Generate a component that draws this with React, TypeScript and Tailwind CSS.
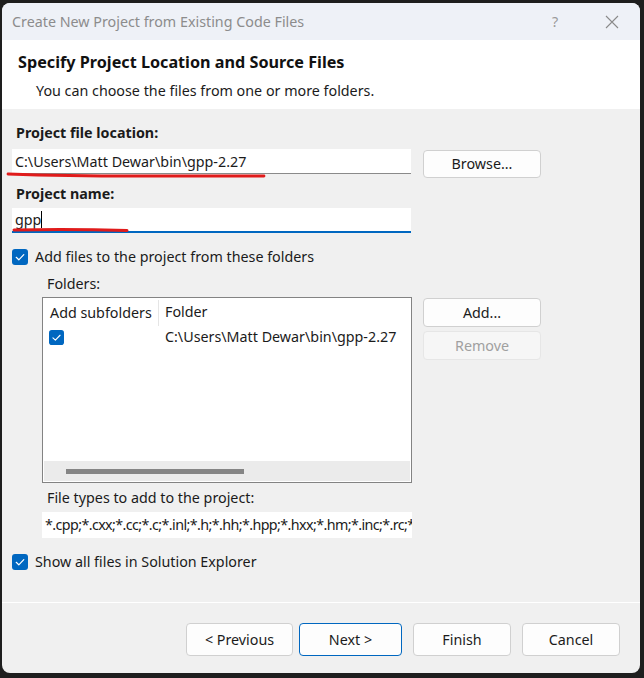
import React from "react";

const font = { fontFamily: '"Segoe UI", "Noto Sans", "Liberation Sans", sans-serif' };

function Check({ size = 16 }: { size?: number }) {
  return (
    <svg width={size} height={size} viewBox="0 0 16 16" className="shrink-0">
      <rect x="0" y="0" width="16" height="16" rx="3" fill="#0067c0" />
      <path d="M4.2 8.3 L6.8 10.8 L11.8 5.6" fill="none" stroke="#fff" strokeWidth="1.2" strokeLinecap="round" strokeLinejoin="round" />
    </svg>
  );
}

function Btn({ children, className = "" }: { children: React.ReactNode; className?: string }) {
  return (
    <button className={`rounded-[4px] border bg-[#fdfdfd] text-[14.3px] text-[#1b1b1b] ${className}`}>
      {children}
    </button>
  );
}

export default function App() {
  return (
    <div className="w-[644px] h-[678px] bg-[#1e1e1e] pt-[3px] pl-[2px] pr-[4px] pb-[5px]" style={font}>
      <div className="h-full w-full rounded-[8px] overflow-hidden bg-[#f0f0f0] flex flex-col">
        {/* title bar */}
        <div className="h-[37px] bg-[#eef1f7] flex items-center pl-[10px] text-[14.3px] text-[#8c8c8c] shrink-0">
          <span className="flex-1">Create New Project from Existing Code Files</span>
          <span className="w-[20px] text-center mr-[40px] text-[#9a9a9a]">?</span>
          <svg width="14" height="14" viewBox="0 0 14 14" className="mr-[21px]">
            <path d="M1 1 L13 13 M13 1 L1 13" stroke="#8a8a8a" strokeWidth="1.1" />
          </svg>
        </div>

        {/* header */}
        <div className="h-[69px] bg-white shrink-0 pl-[16px] pt-[10px]">
          <div className="text-[16.2px] font-bold text-[#111] leading-[24px]">Specify Project Location and Source Files</div>
          <div className="text-[14.3px] text-[#1b1b1b] leading-[20px] mt-[7px] pl-[18px]">You can choose the files from one or more folders.</div>
        </div>

        {/* body */}
        <div className="flex-1 pl-[10px] pt-[14px] text-[14.3px] text-[#1b1b1b]">
          <div className="font-bold leading-[20px] pl-[4px]">Project file location:</div>
          <div className="flex items-start mt-[6px]">
            <div className="relative w-[399px] h-[25px] bg-white border-b border-[#8a8a8a] pl-[3px] leading-[25px]">
              C:\Users\Matt Dewar\bin\gpp-2.27
              <svg className="absolute left-[-6px] top-[22px]" width="262" height="8" viewBox="0 0 262 8">
                <path d="M2 3 Q60 5 130 5 T258 5" fill="none" stroke="#e01b1b" strokeWidth="2.8" strokeLinecap="round" />
              </svg>
            </div>
            <Btn className="ml-[12px] mt-[1px] h-[28px] w-[118px] border-[#d0d0d0]">Browse...</Btn>
          </div>

          <div className="font-bold leading-[20px] pl-[4px] mt-[6px]">Project name:</div>
          <div className="relative w-[399px] h-[25px] bg-white border-b-2 border-[#0067c0] pl-[3px] leading-[24px] mt-[4px]">
            gpp<span className="inline-block w-[1px] h-[17px] bg-black align-[-3px]" />
            <svg className="absolute left-[0px] top-[19px]" width="118" height="6" viewBox="0 0 118 6">
              <path d="M2 3 Q60 2 115 3.5" fill="none" stroke="#e01b1b" strokeWidth="3" strokeLinecap="round" />
            </svg>
          </div>

          <div className="flex items-center gap-[7px] mt-[14px] h-[20px]">
            <Check />
            <span>Add files to the project from these folders</span>
          </div>

          <div className="pl-[35px] mt-[7px] leading-[20px]">Folders:</div>

          <div className="flex items-start pl-[30px] mt-[3px]">
            <div className="w-[370px] h-[186px] bg-white border border-[#838383] flex flex-col">
              <div className="flex h-[28px] items-center">
                <div className="w-[116px] pl-[7px] h-[26px] leading-[26px] border-r border-[#e5e5e5] mt-[2px]">Add subfolders</div>
                <div className="pl-[6px]">Folder</div>
              </div>
              <div className="flex h-[22px] items-center">
                <div className="w-[116px] pl-[6px]"><Check size={15} /></div>
                <div className="pl-[6px]">C:\Users\Matt Dewar\bin\gpp-2.27</div>
              </div>
              <div className="flex-1" />
              <div className="h-[20px] bg-[#ebebeb] flex items-center pl-[22px] mx-[1px] mb-[1px]">
                <div className="w-[178px] h-[5px] bg-[#858585]" />
              </div>
            </div>
            <div className="ml-[11px] flex flex-col gap-[4px] mt-[1px]">
              <Btn className="h-[29px] w-[118px] border-[#d0d0d0]">Add...</Btn>
              <button className="h-[29px] w-[118px] rounded-[4px] border border-[#e6e6e6] bg-[#f6f6f6] text-[14.3px] text-[#a0a0a0]">Remove</button>
            </div>
          </div>

          <div className="pl-[35px] mt-[5px] leading-[20px]">File types to add to the project:</div>
          <div className="ml-[30px] mt-[4px] w-[370px] h-[26px] bg-white overflow-hidden whitespace-nowrap pl-[3px] leading-[26px] tracking-[-0.6px]">
            *.cpp;*.cxx;*.cc;*.c;*.inl;*.h;*.hh;*.hpp;*.hxx;*.hm;*.inc;*.rc;*.resx;*.idl
          </div>

          <div className="flex items-center gap-[7px] mt-[14px] h-[20px]">
            <Check />
            <span>Show all files in Solution Explorer</span>
          </div>
        </div>

        {/* footer */}
        <div className="h-[71px] shrink-0 border-t border-white flex justify-end items-start pt-[20px] pr-[20px]">
          <Btn className="w-[107px] h-[33px] border-[#d0d0d0]">&lt; Previous</Btn>
          <Btn className="w-[103px] h-[33px] border-[#0067c0] ml-[6px]">Next &gt;</Btn>
          <Btn className="w-[98px] h-[33px] border-[#d0d0d0] ml-[11px]">Finish</Btn>
          <Btn className="w-[98px] h-[33px] border-[#d0d0d0] ml-[11px]">Cancel</Btn>
        </div>
      </div>
    </div>
  );
}
